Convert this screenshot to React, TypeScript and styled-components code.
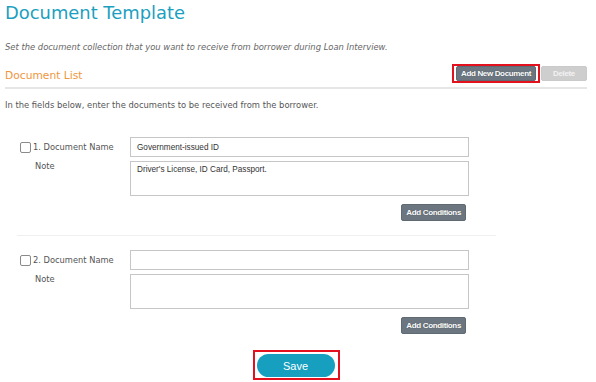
import React from "react";
import styled, { createGlobalStyle } from "styled-components";

const GlobalStyle = createGlobalStyle`
  html, body {
    margin: 0;
    padding: 0;
    background: #fff;
  }
  body {
    font-family: "DejaVu Sans", Verdana, sans-serif;
    color: #555;
  }
  * {
    box-sizing: border-box;
  }
`;

const Page = styled.div`
  width: 596px;
  height: 382px;
  overflow: hidden;
  padding: 0 9px 0 5px;
  display: flex;
  flex-direction: column;
`;

const Title = styled.h1`
  margin: 0;
  font-size: 17.9px;
  line-height: 26px;
  font-weight: normal;
  color: #1c9fbf;
`;

const Intro = styled.p`
  margin: 15px 0 0;
  font-size: 8.4px;
  line-height: 12px;
  font-style: italic;
  color: #666;
`;

const HeaderRow = styled.div`
  margin-top: 11px;
  display: flex;
  justify-content: space-between;
  align-items: flex-end;
  padding-bottom: 4px;
  border-bottom: 2px solid #e6e6e6;
`;

const SectionTitle = styled.h2`
  margin: 0;
  font-size: 10.7px;
  line-height: 14px;
  font-weight: normal;
  color: #f0963c;
`;

const Toolbar = styled.div`
  display: flex;
  align-items: center;
  gap: 1px;
`;

const Highlight = styled.span<{ $pad?: string }>`
  display: inline-flex;
  border: 2px solid #e3101e;
  padding: ${(p) => p.$pad || "0 2px"};
`;

const ToolButton = styled.button<{ $disabled?: boolean; $height?: number }>`
  margin: 0;
  height: ${(p) => p.$height || 15}px;
  padding: 0 4px;
  border: 1px solid ${(p) => (p.$disabled ? "#cacaca" : "#5f6a72")};
  border-radius: 2px;
  background: ${(p) => (p.$disabled ? "#cecece" : "#6b7680")};
  color: ${(p) => (p.$disabled ? "#f2f2f2" : "#fff")};
  font-family: "Liberation Sans", Arial, sans-serif;
  font-weight: bold;
  font-size: 8px;
  letter-spacing: -0.35px;
  line-height: 1;
  text-shadow: ${(p) => (p.$disabled ? "none" : "0 0 1px rgba(0,0,0,0.4)")};
  cursor: pointer;
`;

const Instruction = styled.p`
  margin: 10px 0 0;
  font-size: 8.4px;
  line-height: 12px;
  color: #555;
`;

const DocList = styled.div`
  margin: 26px 0 0 12px;
  width: 479px;
`;

const DocItem = styled.div`
  display: grid;
  grid-template-columns: 111px 339px;
  padding: 0 0 14px 2px;

  & + & {
    border-top: 1px solid #efefef;
    padding-top: 14px;
  }
`;

const LabelCol = styled.div`
  display: flex;
  flex-direction: column;
`;

const NameRow = styled.label`
  height: 20px;
  display: flex;
  align-items: center;
  gap: 2px;
  font-size: 8.3px;
  line-height: 12px;
  color: #555;
`;

const Check = styled.input`
  appearance: none;
  margin: 0 0 0 1px;
  width: 11px;
  height: 11px;
  border: 1px solid #8a8a8a;
  border-radius: 2px;
  background: #fff;
`;

const NoteLabel = styled.span`
  margin-top: 3px;
  padding-left: 16px;
  font-size: 8.3px;
  line-height: 12px;
  color: #555;
`;

const Fields = styled.div`
  display: flex;
  flex-direction: column;
  gap: 4px;
`;

const fieldText = `
  font-family: "Liberation Sans", Arial, sans-serif;
  font-size: 8.2px;
  color: #333;
  border: 1px solid #c6c6c6;
  background: #fff;
  outline: none;
  margin: 0;
`;

const NameInput = styled.input`
  ${fieldText}
  height: 20px;
  padding: 0 6px;
`;

const NoteArea = styled.textarea`
  ${fieldText}
  height: 35px;
  padding: 2px 6px;
  line-height: 11px;
  resize: none;
  overflow: hidden;
`;

const ConditionsRow = styled.div`
  margin-top: 4px;
  display: flex;
  justify-content: flex-end;
  padding-right: 3px;
`;

const SaveRow = styled.div`
  margin-top: 2px;
  display: flex;
  justify-content: center;
`;

const SaveButton = styled.button`
  margin: 0;
  width: 78px;
  height: 23px;
  border: none;
  border-radius: 12px;
  background: #169fbf;
  color: #fff;
  font-family: "Liberation Sans", Arial, sans-serif;
  font-size: 11px;
  cursor: pointer;
`;

interface DocumentEntry {
  name: string;
  note: string;
}

const documents: DocumentEntry[] = [
  { name: "Government-issued ID", note: "Driver's License, ID Card, Passport." },
  { name: "", note: "" },
];

const App = () => {
  return (
    <>
      <GlobalStyle />
      <Page>
        <Title>Document Template</Title>
        <Intro>Set the document collection that you want to receive from borrower during Loan Interview.</Intro>
        <HeaderRow>
          <SectionTitle>Document List</SectionTitle>
          <Toolbar>
            <Highlight>
              <ToolButton>Add New Document</ToolButton>
            </Highlight>
            <ToolButton $disabled style={{ width: 46 }}>
              Delete
            </ToolButton>
          </Toolbar>
        </HeaderRow>
        <Instruction>In the fields below, enter the documents to be received from the borrower.</Instruction>
        <DocList>
          {documents.map((doc, index) => (
            <DocItem key={index}>
              <LabelCol>
                <NameRow>
                  <Check type="checkbox" />
                  {index + 1}. Document Name
                </NameRow>
                <NoteLabel>Note</NoteLabel>
              </LabelCol>
              <Fields>
                <NameInput defaultValue={doc.name} spellCheck={false} />
                <NoteArea defaultValue={doc.note} spellCheck={false} />
                <ConditionsRow>
                  <ToolButton $height={17}>Add Conditions</ToolButton>
                </ConditionsRow>
              </Fields>
            </DocItem>
          ))}
        </DocList>
        <SaveRow>
          <Highlight $pad="2px 3px 1px 2px">
            <SaveButton>Save</SaveButton>
          </Highlight>
        </SaveRow>
      </Page>
    </>
  );
};

export default App;
